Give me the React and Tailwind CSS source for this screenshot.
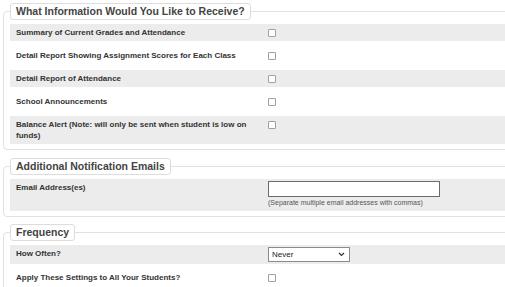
import React from 'react';

const INFO_ROWS = [
  'Summary of Current Grades and Attendance',
  'Detail Report Showing Assignment Scores for Each Class',
  'Detail Report of Attendance',
  'School Announcements',
  'Balance Alert (Note: will only be sent when student is low on funds)',
];

const Check = () => (
  <span className="block w-[8px] h-[8px] mt-[2px] border border-[#a0a0a0] rounded-[1px] bg-white" />
);

const Row = ({ label, striped, children }) => (
  <div className={`flex ${striped ? 'bg-[#ececec]' : 'bg-white'}`}>
    <div className="w-[252px] shrink-0 pl-[6px] pr-[4px] py-[3px] text-[8px] leading-[11px] font-bold text-[#333]">
      {label}
    </div>
    <div className="flex-1 pl-[6px] py-[3px]">{children}</div>
  </div>
);

const Section = ({ title, className = '', children }) => (
  <fieldset className={`w-[540px] border border-[#e2e2e2] rounded-[4px] pl-[6px] pr-0 pt-[4px] pb-[5px] ${className}`}>
    <legend className="px-[5px] h-[17px] leading-[15px] border border-[#dddddd] rounded-[3px] bg-white text-[10.5px] font-bold text-[#444]">
      {title}
    </legend>
    {children}
  </fieldset>
);

export default function App() {
  return (
    <div className="w-[505px] h-[287px] overflow-hidden bg-white pl-[3px] pt-[3px] font-['Liberation_Sans',Arial,sans-serif]">
      <Section title="What Information Would You Like to Receive?">
        <div className="flex flex-col gap-[6px]">
          {INFO_ROWS.map((label, i) => (
            <Row key={label} label={label} striped={i % 2 === 0}>
              <Check />
            </Row>
          ))}
        </div>
      </Section>

      <Section title="Additional Notification Emails" className="mt-[8px]">
        <Row label="Email Address(es)" striped>
          <div>
            <div className="w-[172px] h-[16px] -mt-[1px] border border-[#6b6b6b] bg-white" />
            <div className="mt-[1px] text-[7px] leading-[10px] text-[#555]">
              (Separate multiple email addresses with commas)
            </div>
          </div>
        </Row>
      </Section>

      <Section title="Frequency" className="mt-[7px]">
        <div className="flex flex-col gap-[5px]">
          <div className="flex bg-[#ececec] h-[19px]">
            <div className="w-[252px] shrink-0 pl-[6px] pt-[3px] text-[8px] leading-[11px] font-bold text-[#333]">
              How Often?
            </div>
            <div className="flex-1 pl-[6px] pt-[2px]">
              <div className="w-[82px] h-[15px] border border-[#8a8a8a] bg-white flex items-center justify-between pl-[3px] pr-[4px] text-[8px] text-[#222]">
                <span>Never</span>
                <svg width="7" height="5" viewBox="0 0 7 5">
                  <path d="M1 1l2.5 2.5L6 1" fill="none" stroke="#333" strokeWidth="1.2" />
                </svg>
              </div>
            </div>
          </div>
          <Row label="Apply These Settings to All Your Students?">
            <Check />
          </Row>
        </div>
      </Section>
    </div>
  );
}
